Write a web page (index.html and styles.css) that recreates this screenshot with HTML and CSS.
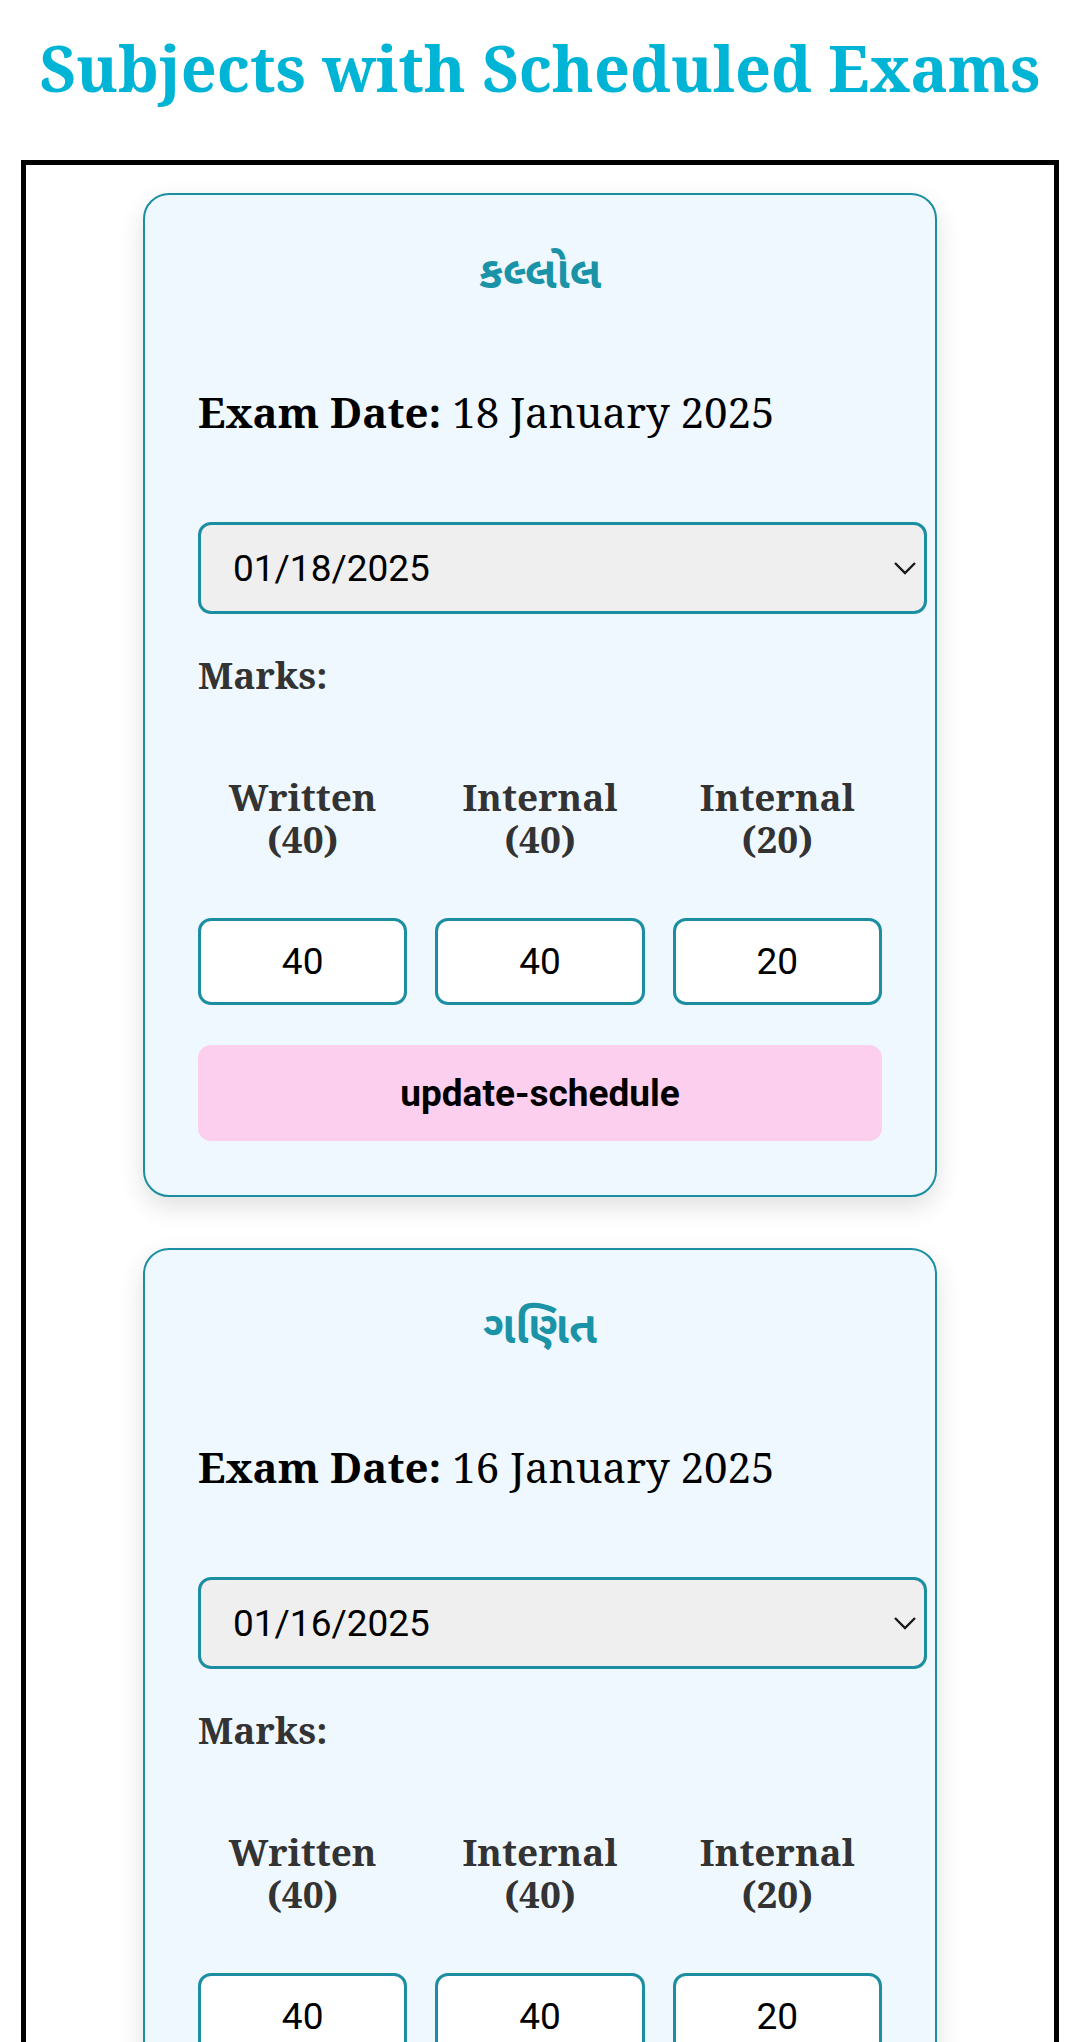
FILE: index.html
```html
<!DOCTYPE html>
<html lang="en">
<head>
<meta charset="utf-8">
<title>Subjects with Scheduled Exams</title>
<link rel="stylesheet" href="styles.css">
</head>
<body>
<h1 class="page-title">Subjects with Scheduled Exams</h1>
<div class="frame">
  <div class="card">
    <h3 class="subject">કલ્લોલ</h3>
    <p class="exam-date"><strong>Exam Date:</strong> 18 January 2025</p>
    <div class="select-wrap">
      <select class="date-select"><option>01/18/2025</option></select>
      <svg class="chev" width="24" height="14" viewBox="0 0 24 14"><path d="M2 2 L12 12 L22 2" fill="none" stroke="#1a1a1a" stroke-width="2.4"/></svg>
    </div>
    <div class="marks-label">Marks:</div>
    <div class="marks-grid">
      <div class="col-label">Written<br>(40)</div>
      <div class="col-label">Internal<br>(40)</div>
      <div class="col-label">Internal<br>(20)</div>
      <input class="mark-input" type="text" value="40">
      <input class="mark-input" type="text" value="40">
      <input class="mark-input" type="text" value="20">
    </div>
    <button class="update-btn">update-schedule</button>
  </div>
  <div class="card">
    <h3 class="subject">ગણિત</h3>
    <p class="exam-date"><strong>Exam Date:</strong> 16 January 2025</p>
    <div class="select-wrap">
      <select class="date-select"><option>01/16/2025</option></select>
      <svg class="chev" width="24" height="14" viewBox="0 0 24 14"><path d="M2 2 L12 12 L22 2" fill="none" stroke="#1a1a1a" stroke-width="2.4"/></svg>
    </div>
    <div class="marks-label">Marks:</div>
    <div class="marks-grid">
      <div class="col-label">Written<br>(40)</div>
      <div class="col-label">Internal<br>(40)</div>
      <div class="col-label">Internal<br>(20)</div>
      <input class="mark-input" type="text" value="40">
      <input class="mark-input" type="text" value="40">
      <input class="mark-input" type="text" value="20">
    </div>
    <button class="update-btn">update-schedule</button>
  </div>
</div>
</body>
</html>
```
FILE: styles.css
```css
html, body {
  margin: 0;
  padding: 0;
  background: #ffffff;
}
body {
  padding: 0 21px;
  font-family: "Noto Serif", "DejaVu Serif", serif;
  color: #000;
}
.page-title {
  margin: 25px 0 49px;
  font-size: 63px;
  line-height: 86px;
  font-weight: 700;
  text-align: center;
  white-space: nowrap;
  color: #00b4d6;
}
.frame {
  border: 5px solid #000;
  padding: 28px 0 0;
  display: flex;
  flex-direction: column;
  align-items: center;
  gap: 51px;
  height: 1900px;
  box-sizing: border-box;
}
.card {
  width: 794px;
  box-sizing: border-box;
  border: 2px solid #1b8fa1;
  border-radius: 26px;
  background: #f0f8ff;
  box-shadow: 0 10px 26px rgba(0,0,0,0.12);
  padding: 52px 53px 54px;
  display: flex;
  flex-direction: column;
  align-items: stretch;
}
.subject {
  margin: 0;
  text-align: center;
  font-family: "Noto Sans Gujarati", "Noto Sans", sans-serif;
  font-size: 45px;
  line-height: 60px;
  font-weight: 700;
  color: #1a93a6;
}
.exam-date {
  margin: 75px 0 0;
  font-size: 42px;
  line-height: 60px;
  font-weight: 400;
}
.exam-date strong {
  font-weight: 700;
}
.select-wrap {
  position: relative;
  margin-top: 80px;
  width: 729px;
}
.date-select {
  display: block;
  width: 729px;
  height: 92px;
  box-sizing: border-box;
  appearance: none;
  -webkit-appearance: none;
  border: 3px solid #1b8fa1;
  border-radius: 13px;
  background: #efefef;
  padding: 0 0 0 32px;
  font-family: Roboto, "Noto Sans", sans-serif;
  font-size: 37px;
  color: #000;
}
.chev {
  position: absolute;
  right: 10px;
  top: 39px;
}
.marks-label {
  margin-top: 36px;
  font-size: 37px;
  line-height: 50px;
  font-weight: 700;
  color: #333;
}
.marks-grid {
  margin-top: 76px;
  display: grid;
  grid-template-columns: repeat(3, 1fr);
  column-gap: 28px;
  row-gap: 58px;
}
.col-label {
  text-align: center;
  font-size: 37px;
  line-height: 42px;
  font-weight: 700;
  color: #333;
}
.mark-input {
  width: 100%;
  height: 87px;
  box-sizing: border-box;
  border: 3px solid #1b8fa1;
  border-radius: 13px;
  background: #fff;
  text-align: center;
  font-family: Roboto, "Noto Sans", sans-serif;
  font-size: 37px;
  color: #000;
  padding: 0;
}
.update-btn {
  margin-top: 40px;
  height: 96px;
  border: none;
  border-radius: 13px;
  background: #fccfee;
  font-family: Roboto, "Noto Sans", sans-serif;
  font-size: 37px;
  font-weight: 700;
  color: #000;
}
```
